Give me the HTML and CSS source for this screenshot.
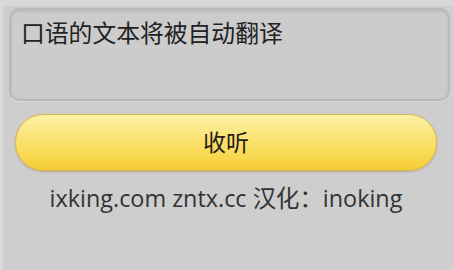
FILE: index.html
```html
<!DOCTYPE html>
<html lang="zh-CN">
<head>
<meta charset="utf-8">
<link rel="stylesheet" href="styles.css">
</head>
<body>
<div class="screen">
  <div class="input">口语的文本将被自动翻译</div>
  <div class="btn">收听</div>
  <div class="credit">ixking.com zntx.cc 汉化：inoking</div>
</div>
</body>
</html>
```
FILE: styles.css
```css
html, body {
  margin: 0;
  padding: 0;
  background: #cfcfcf;
}
.screen {
  width: 450px;
  height: 264px;
  background: #cecece;
  border-top: 6px solid #d8d8d8;
  border-left: 3px solid #dadada;
  display: flex;
  flex-direction: column;
  font-family: "Open Sans", "Noto Sans CJK SC", sans-serif;
  color: #2a2a2a;
}
.input {
  margin: 2px 3px 0 6px;
  box-sizing: border-box;
  height: 93px;
  border: 2px solid #b9b9b9;
  border-radius: 10px;
  background: #cccccc;
  box-shadow: inset 0 1px 3px rgba(0,0,0,0.12), 0 1px 0 #dcdcdc;
  padding: 7px 10px;
  font-family: "Noto Sans CJK SC", sans-serif;
  font-size: 23.8px;
  line-height: 30px;
  color: #222;
}
.btn {
  margin: 13px 0 0 12px;
  width: 422px;
  height: 57px;
  box-sizing: border-box;
  border-radius: 28px;
  border: 1px solid #d8b650;
  background: linear-gradient(to bottom, #fdf0a6 0%, #fbe57c 35%, #f8d84f 75%, #f4cc34 100%);
  box-shadow: 0 1px 2px rgba(120,100,40,0.35);
  display: flex;
  align-items: center;
  justify-content: center;
  font-family: "Noto Sans CJK SC", sans-serif;
  font-size: 23px;
  color: #262018;
  padding-bottom: 3px;
}
.credit {
  margin-top: 9px;
  padding-right: 4px;
  text-align: center;
  font-size: 23.4px;
  line-height: 36px;
  color: #333;
}
```
